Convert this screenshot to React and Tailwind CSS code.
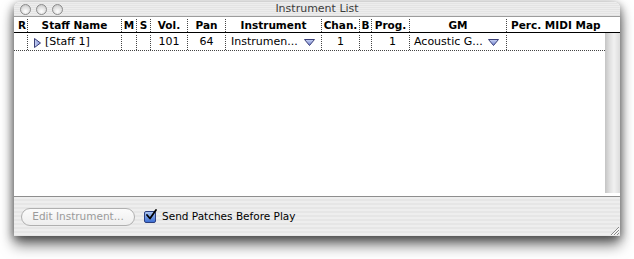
const cols = [
  { key: 'r', label: 'R', w: 14, align: 'left' },
  { key: 'staff', label: 'Staff Name', w: 94 },
  { key: 'm', label: 'M', w: 15 },
  { key: 's', label: 'S', w: 14 },
  { key: 'vol', label: 'Vol.', w: 37 },
  { key: 'pan', label: 'Pan', w: 38 },
  { key: 'instr', label: 'Instrument', w: 96 },
  { key: 'chan', label: 'Chan.', w: 38 },
  { key: 'b', label: 'B', w: 12 },
  { key: 'prog', label: 'Prog.', w: 38 },
  { key: 'gm', label: 'GM', w: 97 },
  { key: 'perc', label: 'Perc. MIDI Map', w: 98, align: 'left' },
]

const dotted = 'border-r border-dotted border-[#444]'

function TrafficLight() {
  return (
    <div className="w-[11px] h-[11px] rounded-full border border-[#8a8a8a] bg-[radial-gradient(circle_at_50%_70%,#ffffff,#dcdcdc_60%,#b9b9b9)]" />
  )
}

function PopupArrow() {
  return (
    <svg width="11" height="7" viewBox="0 0 11 7" className="shrink-0">
      <defs>
        <linearGradient id="pa" x1="0" y1="0" x2="0" y2="1">
          <stop offset="0" stopColor="#c9d3f2" />
          <stop offset="1" stopColor="#6f7fd0" />
        </linearGradient>
      </defs>
      <path d="M0.5 0.5 L10.5 0.5 L5.5 6.5 Z" fill="url(#pa)" stroke="#3a3f78" strokeWidth="1" strokeLinejoin="round" />
    </svg>
  )
}

function Disclosure() {
  return (
    <svg width="7" height="10" viewBox="0 0 7 10" className="shrink-0">
      <defs>
        <linearGradient id="dc" x1="0" y1="0" x2="1" y2="0">
          <stop offset="0" stopColor="#c9d3f2" />
          <stop offset="1" stopColor="#7d8cd6" />
        </linearGradient>
      </defs>
      <path d="M0.5 0.5 L6.5 5 L0.5 9.5 Z" fill="url(#dc)" stroke="#3a3f78" strokeWidth="1" strokeLinejoin="round" />
    </svg>
  )
}

function Cell({ w, className = '', children, last }) {
  return (
    <div
      className={`h-full flex items-center shrink-0 whitespace-nowrap ${last ? '' : dotted} ${className}`}
      style={{ width: w }}
    >
      {children}
    </div>
  )
}

export default function App() {
  return (
    <div className="w-[634px] h-[259px] bg-white overflow-hidden font-['DejaVu_Sans',sans-serif] text-black">
      <div className="ml-[14px] mt-[2px] w-[606px] h-[234px] flex flex-col rounded-t-[6px] overflow-hidden shadow-[0_9px_14px_rgba(0,0,0,0.55),-2px_2px_8px_rgba(0,0,0,0.25),2px_2px_8px_rgba(0,0,0,0.25)]">
        {/* Title bar */}
        <div className="h-[15px] relative flex items-center bg-[repeating-linear-gradient(to_bottom,#ededed_0px,#ededed_1px,#e4e4e4_1px,#e4e4e4_2px)] border-b border-[#9c9c9c]">
          <div className="flex gap-[5px] pl-[6px]">
            <TrafficLight />
            <TrafficLight />
            <TrafficLight />
          </div>
          <div className="absolute inset-0 flex items-center justify-center text-[11px] text-[#3c3c3c]">
            Instrument List
          </div>
        </div>

        {/* Table */}
        <div className="flex-1 flex flex-col bg-white">
          {/* Header */}
          <div className="h-[16px] flex border-b border-black text-[10.5px] font-bold pt-[2px]">
            {cols.map((c, i) => (
              <Cell
                key={c.key}
                w={c.w}
                last={i === cols.length - 1}
                className={c.align === 'left' ? 'justify-start pl-[4px]' : 'justify-center'}
              >
                {c.label}
              </Cell>
            ))}
            <div className="flex-1" />
          </div>
          <div className="flex-1 flex">
            <div className="w-[591px] flex flex-col">
              {/* Row */}
              <div className="h-[18px] flex border-b border-dotted border-[#444] text-[11px] pt-[2px]">
                <Cell w={14} />
                <Cell w={94} className="pl-[6px] gap-[4px]">
                  <Disclosure />
                  <span>[Staff 1]</span>
                </Cell>
                <Cell w={15} />
                <Cell w={14} />
                <Cell w={37} className="justify-center">101</Cell>
                <Cell w={38} className="justify-center">64</Cell>
                <Cell w={96} className="pl-[5px] pr-[6px] justify-between">
                  <span>Instrumen...</span>
                  <PopupArrow />
                </Cell>
                <Cell w={38} className="justify-center">1</Cell>
                <Cell w={12} />
                <Cell w={38} className="justify-end pr-[13px]">1</Cell>
                <Cell w={97} className="pl-[4px] pr-[7px] justify-between">
                  <span>Acoustic G...</span>
                  <PopupArrow />
                </Cell>
                <Cell w={98} last />
              </div>
              <div className="flex-1" />
            </div>
            {/* Scroll track */}
            <div className="w-[15px] mb-[3px] bg-[linear-gradient(to_right,#c4c4c4,#e2e2e2_35%,#f1f1f1_60%,#dcdcdc)]" />
          </div>
        </div>

        {/* Bottom bar */}
        <div className="h-[40px] relative flex items-center gap-[9px] pl-[7px] border-t border-[#8e8e8e] bg-[repeating-linear-gradient(to_bottom,#eeeeee_0px,#eeeeee_2px,#e6e6e6_2px,#e6e6e6_4px)]">
          <div className="w-[114px] h-[18px] rounded-full border border-[#b0b0b0] bg-[linear-gradient(to_bottom,#fbfbfb,#eeeeee)] flex items-center justify-center text-[10.5px] text-[#9a9a9a] mt-[1px]">
            Edit Instrument...
          </div>
          <div className="flex items-center gap-[6px]">
            <div className="relative w-[12px] h-[12px] rounded-[2px] border border-[#2c3f80] bg-[linear-gradient(to_bottom,#a9c3f0,#3d6fd4)]">
              <svg width="12" height="12" viewBox="0 0 12 12" className="absolute left-[0px] top-[-3px]">
                <path d="M2 6 L5 9.5 L11 1" fill="none" stroke="#000" strokeWidth="1.8" strokeLinecap="round" strokeLinejoin="round" />
              </svg>
            </div>
            <span className="text-[10.5px]">Send Patches Before Play</span>
          </div>
          <svg width="11" height="11" viewBox="0 0 11 11" className="absolute right-0 bottom-0">
            <path d="M10 2 L2 10 M10 5 L5 10 M10 8 L8 10" stroke="#8a8a8a" strokeWidth="1" />
            <path d="M10.5 2.5 L2.5 10.5 M10.5 5.5 L5.5 10.5" stroke="#ffffff" strokeWidth="0.8" />
          </svg>
        </div>
      </div>
    </div>
  )
}
